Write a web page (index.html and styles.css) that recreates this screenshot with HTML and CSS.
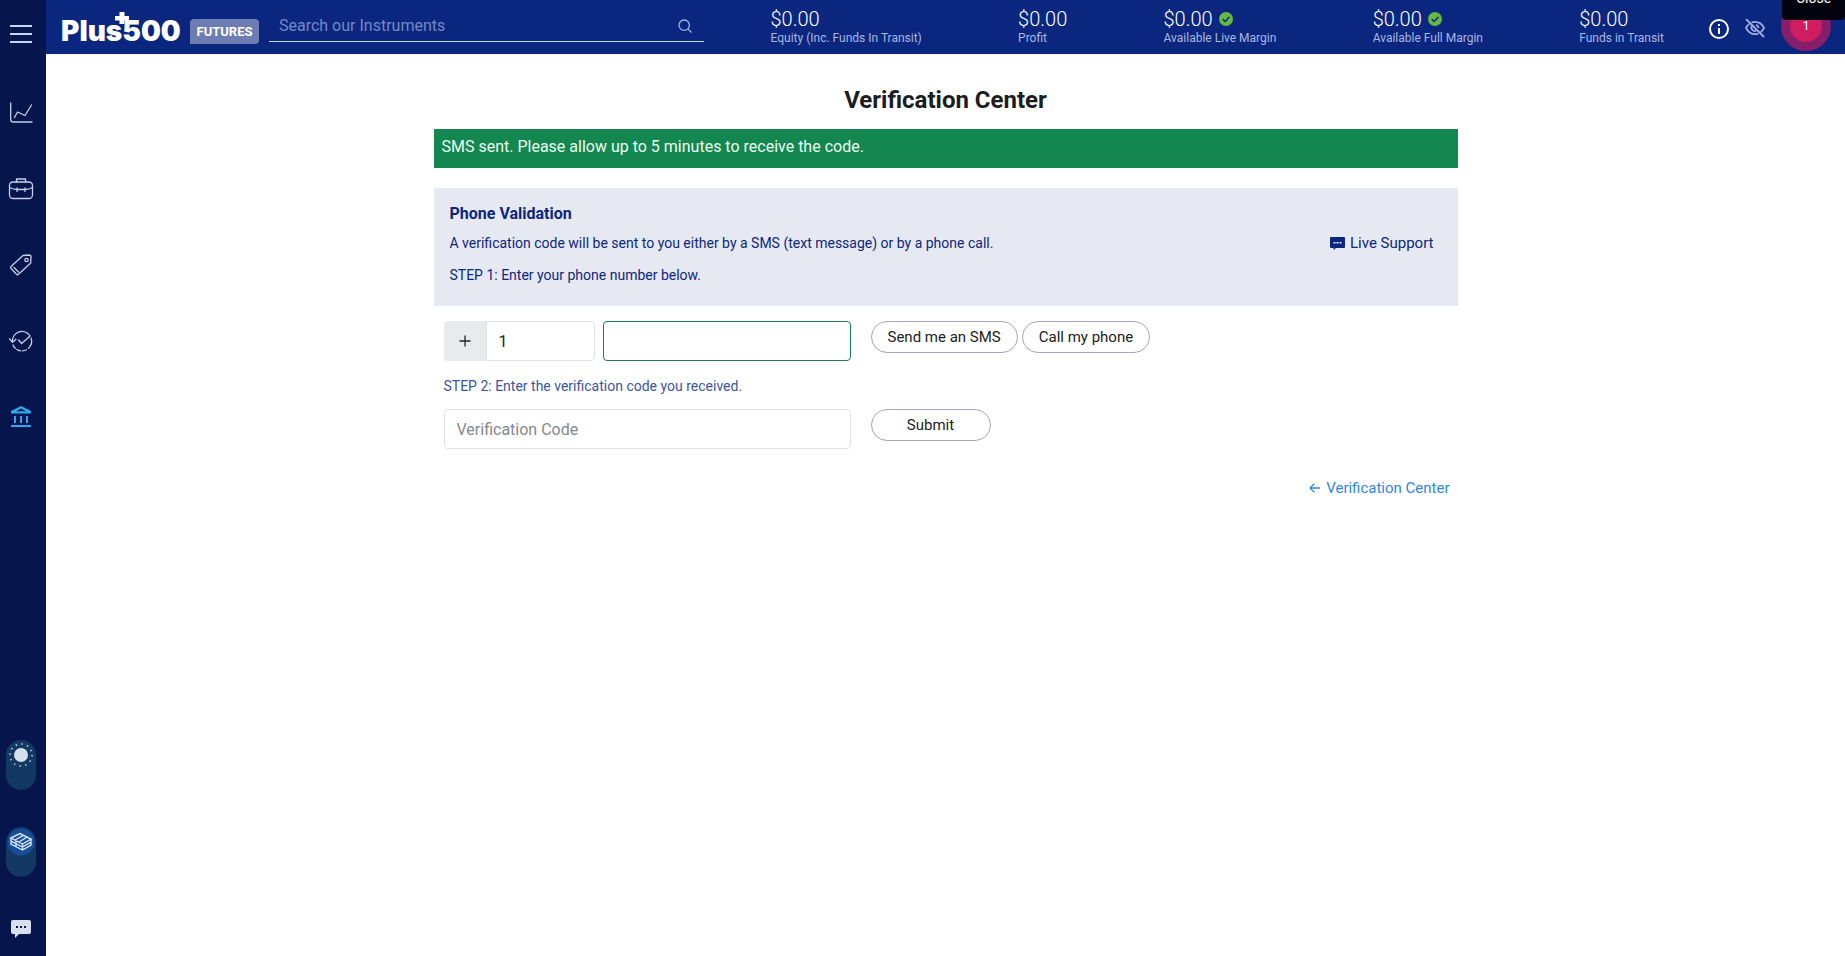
FILE: index.html
```html
<!DOCTYPE html>
<html lang="en">
<head>
<meta charset="utf-8">
<title>Verification Center</title>
<link rel="stylesheet" href="styles.css">
</head>
<body>
<div class="app">
  <nav class="sidebar" aria-label="Main">
    <button class="side-btn menu-btn" aria-label="Menu"><svg width="24" height="20" viewBox="0 0 24 20"><path d="M1 2h22M1 10h22M1 18h22" stroke="#c3d8fb" stroke-width="2"/></svg></button>
    <a class="side-btn" href="#" aria-label="Trade"><svg width="24" height="24" viewBox="0 0 24 24" class="line"><path d="M1.700 2v16.500q0 2.500 2.500 2.500H23M5.500 16.500l3-5.500 7.500 3.500L22.500 4"/></svg></a>
    <a class="side-btn" href="#" aria-label="Positions"><svg width="26" height="24" viewBox="0 0 26 24" class="line"><rect x="1.500" y="5" width="23" height="16.500" rx="3.500"/><path d="M8.500 5V2h9v3M1.500 10.500q4 2 7.500 2h8q4 0 7.500-2M9 11v3.500M17 11v3.500"/></svg></a>
    <a class="side-btn" href="#" aria-label="Orders"><svg width="24" height="24" viewBox="0 0 24 24" class="line"><path d="M14 2.500l6-.500q2 0 2 2l-.300 6L9.500 21.300q-1 .900-2 0L2 15.500q-.800-1 0-2zM5 14.500l4.500 4.500"/><circle cx="17.500" cy="7" r="1.700"/></svg></a>
    <a class="side-btn" href="#" aria-label="History"><svg width="26" height="24" viewBox="0 0 26 24" class="line"><path d="M4.500 13a9.500 9.500 0 0 1 17-6.800M23 9a9.500 9.500 0 0 1-2.500 10.200"/><path d="M18.500 20.700A9.500 9.500 0 0 1 4.900 15.500" stroke-dasharray="4 2"/><path d="M1.500 9.800l3 3.400 3.400-3M10.500 11l3.200 3.500L22 7" /></svg></a>
    <a class="side-btn" href="#" aria-label="Funds"><svg width="22" height="22" viewBox="0 0 22 22"><path fill="#2ba8f0" fill-rule="evenodd" d="M11 0l10 5v2.500H1V5zm0 2.500L6 5.300h10zM4 10h2v7H4zm6 0h2v7h-2zm6 0h2v7h-2zM1 19h20v2H1z"/></svg></a>
    <div class="side-foot">
      <button class="toggle" aria-label="Theme"><svg width="30" height="30" viewBox="0 0 30 30"><circle cx="15" cy="15" r="11" fill="none" stroke="#a9bdd4" stroke-width="2" stroke-dasharray="1.400 4.360"/><circle cx="15" cy="15" r="7" fill="#d6dfee"/></svg></button>
      <button class="toggle" aria-label="Account mode"><svg width="30" height="30" viewBox="0 0 30 30"><circle cx="15" cy="15" r="13.500" fill="#174c96"/><g fill="none" stroke="#d6e4f8" stroke-width="1.400"><path d="M5 11l9-4.500L25 12l-8.500 5zM9 13l8.500-4.700 3.500 1.700-8 5M5 11v3l11.500 6 8.500-5v-3M5 14v3l11.500 6 8.500-5v-3M16.500 17v6M10 14v5"/></g></svg></button>
      <button class="side-btn chat-btn" aria-label="Chat"><svg width="20" height="18" viewBox="0 0 20 18"><path fill="#d9dfee" d="M2 0h16q2 0 2 2v10q0 2-2 2H8l-4 4v-4H2q-2 0-2-2V2q0-2 2-2z"/><path fill="#06154c" d="M5 6h2v2H5zm4 0h2v2H9zm4 0h2v2h-2z"/></svg></button>
    </div>
  </nav>

  <div class="page">
    <header class="topbar">
      <a class="brand" href="#" aria-label="Plus500 Futures">
        <span class="wordmark">Plus500<svg class="cross" width="14" height="12" viewBox="0 0 14 12"><path fill="#fff" d="M4.500 0h5v4H14v4.500H9.500V12h-5V8.500H0V4h4.500z"/></svg></span>
        <span class="tag">FUTURES</span>
      </a>
      <label class="search">
        <input type="text" placeholder="Search our Instruments" aria-label="Search our Instruments">
        <svg width="14" height="14" viewBox="0 0 14 14" fill="none" stroke="#9fb4e4" stroke-width="1.300"><circle cx="6.200" cy="6.200" r="5.200"/><path d="M10 10l3.500 3.500"/></svg>
      </label>
      <div class="stats">
        <div class="stat"><div class="value">$0.00</div><div class="name">Equity (Inc. Funds In Transit)</div></div>
        <div class="stat"><div class="value">$0.00</div><div class="name">Profit</div></div>
        <div class="stat"><div class="value">$0.00<svg width="14" height="14" viewBox="0 0 14 14"><circle cx="7" cy="7" r="7" fill="#66b845"/><path d="M3.800 7.200l2.300 2.300 4.300-4.500" fill="none" stroke="#0b267f" stroke-width="1.500"/></svg></div><div class="name">Available Live Margin</div></div>
        <div class="stat"><div class="value">$0.00<svg width="14" height="14" viewBox="0 0 14 14"><circle cx="7" cy="7" r="7" fill="#66b845"/><path d="M3.800 7.200l2.300 2.300 4.300-4.500" fill="none" stroke="#0b267f" stroke-width="1.500"/></svg></div><div class="name">Available Full Margin</div></div>
        <div class="stat"><div class="value">$0.00</div><div class="name">Funds in Transit</div></div>
      </div>
      <div class="tools">
        <button class="tool" aria-label="Information"><svg width="20" height="20" viewBox="0 0 20 20"><circle cx="10" cy="10" r="9" fill="none" stroke="#fff" stroke-width="2"/><path fill="#fff" d="M9 5h2v2H9zm0 4h2v6H9z"/></svg></button>
        <button class="tool" aria-label="Hide balances"><svg width="20" height="20" viewBox="0 0 20 20" fill="none" stroke="#9fb0e0" stroke-width="1.800"><path d="M1 0l18 18M6.500 3.500Q8 2.900 10 2.900q6 0 9 6-1.200 2.600-3.300 4.200M4.200 5Q2 6.500 1 8.900q3 6.300 9 6.300 1.700 0 3.200-.600M11 6q2.500.700 2.500 3M6.700 7q-.900 2 .500 3.700t3.800 1.300"/></svg></button>
        <button class="alerts" aria-label="Notifications">1</button>
        <div class="tooltip" role="tooltip">Close</div>
      </div>
    </header>

    <main class="content">
      <h1>Verification Center</h1>
      <div class="notice" role="status">SMS sent. Please allow up to 5 minutes to receive the code.</div>
      <section class="panel">
        <div>
          <h2>Phone Validation</h2>
          <p>A verification code will be sent to you either by a SMS (text message) or by a phone call.</p>
          <p>STEP 1: Enter your phone number below.</p>
        </div>
        <a class="support" href="#"><svg width="15" height="13" viewBox="0 0 15 13"><path fill="#0b267f" d="M1 0h13q1 0 1 1v9q0 1-1 1H6l-2.500 2v-2H1q-1 0-1-1V1q0-1 1-1z"/><path fill="#e6e9f2" d="M3.500 5h2v1.500h-2zm3 0h2v1.500h-2zm3 0h2v1.500h-2z"/></svg>Live Support</a>
      </section>
      <form class="form">
        <div class="row">
          <div class="fields">
            <div class="country"><span class="plus"><svg width="12" height="12" viewBox="0 0 12 12"><path d="M6 .500v11M.500 6h11" stroke="#212529" stroke-width="1.300"/></svg></span><input type="text" value="1" aria-label="Country code"></div>
            <input class="phone" type="tel" aria-label="Phone number">
          </div>
          <div class="actions"><button type="button" class="pill">Send me an SMS</button><button type="button" class="pill">Call my phone</button></div>
        </div>
        <label class="step" for="code">STEP 2: Enter the verification code you received.</label>
        <div class="row">
          <div class="fields"><input class="code" id="code" type="text" placeholder="Verification Code"></div>
          <div class="actions"><button type="button" class="pill submit">Submit</button></div>
        </div>
      </form>
      <a class="back" href="#"><svg width="11" height="10" viewBox="0 0 11 10" fill="none" stroke="#2f86e6" stroke-width="1.300"><path d="M11 5H1M5.300 .700L1 5l4.300 4.300"/></svg>Verification Center</a>
    </main>
  </div>
</div>
</body>
</html>
```

FILE: styles.css
```css
* { box-sizing: border-box; }
body { margin: 0; font-family: Roboto, "Liberation Sans", sans-serif; font-size: 14px; color: #1b1d21; background: #fff; }
a { color: inherit; text-decoration: none; }
button { font-family: inherit; padding: 0; border: 0; background: none; color: inherit; cursor: pointer; }
input { font-family: inherit; font-size: 16px; min-width: 0; outline: 0; }
svg { display: block; flex: none; }
.app { display: flex; min-height: 100vh; }

.sidebar { flex: none; width: 46px; background: #06154c; display: flex; flex-direction: column; align-items: center; padding-right: 4px; }
.side-btn { display: flex; align-items: center; justify-content: center; width: 100%; height: 76px; }
.menu-btn { height: 68px; margin-bottom: 7px; }
.line { fill: none; stroke: #c5cfe8; stroke-width: 1.3; stroke-linecap: round; stroke-linejoin: round; }
.side-foot { margin-top: auto; display: flex; flex-direction: column; align-items: center; gap: 37px; padding-bottom: 18px; }
.toggle { width: 30px; height: 50px; border-radius: 15px; background: #123863; display: flex; align-items: flex-start; }
.chat-btn { height: 18px; margin-top: 6px; }

.page { flex: 1; min-width: 0; display: flex; flex-direction: column; }
.topbar { height: 54px; background: #0b267f; display: flex; align-items: flex-start; color: #fff; padding-left: 15px; }
.brand { display: flex; align-items: flex-start; gap: 8px; }
.wordmark { position: relative; width: 121px; padding-top: 15px; font-family: Inter, sans-serif; font-size: 28px; font-weight: 900; line-height: 32px; }
.cross { position: absolute; left: 54px; top: 12px; }
.tag { width: 69px; margin-top: 19px; height: 25px; border-radius: 4px; border-bottom-left-radius: 0; background: #6d7db2; font-size: 13px; font-weight: 700; line-height: 25px; text-align: center; }
.search { display: flex; align-items: center; flex: 1 1 434px; height: 42px; margin-left: 10px; padding: 10px 12px 0 10px; border-bottom: 1px solid #c3d8fb; }
.search input { flex: 1; border: 0; padding: 0; background: none; color: #fff; }
.search input::placeholder { color: #7389c6; opacity: 1; }
.stats { flex: 1 1 893px; display: flex; justify-content: space-between; margin-left: 67px; padding-top: 7px; }
.value { display: flex; align-items: center; gap: 6px; font-size: 20px; font-weight: 300; line-height: 24px; }
.name { color: #a9b8e2; font-size: 12px; line-height: 14px; white-space: nowrap; }
.tools { position: relative; display: flex; align-items: flex-start; gap: 16px; margin-left: 45px; padding-right: 14px; }
.tool { margin-top: 19px; }
.alerts { width: 50px; height: 50px; margin-top: 1px; border: 9px solid #861e6c; border-radius: 50%; background: #cf1d60; color: #fff; font-size: 12px; }
.tooltip { position: absolute; right: 0; top: -12px; width: 63px; height: 32px; border-radius: 4px; background: #03030f; font-size: 14px; line-height: 20px; text-align: center; }

.content { width: 1024px; max-width: 100%; margin: 0 auto; padding-top: 29px; display: flex; flex-direction: column; }
h1 { margin: 0; font-size: 24px; font-weight: 700; line-height: 34px; text-align: center; }
.notice { margin-top: 12px; padding: 6px 8px 9px; background: #14864f; color: #e9fff3; font-size: 16px; line-height: 24px; }
.panel { display: flex; justify-content: space-between; align-items: flex-start; margin-top: 20px; padding: 17px 24px 20px 16px; background: #e6e9f2; color: #0b267f; }
h2 { margin: 0 0 9px; font-size: 16px; font-weight: 700; line-height: 18px; }
.panel p { margin: 0 0 10px; font-size: 14px; line-height: 22px; }
.panel p:last-child { margin-bottom: 0; }
.support { display: flex; align-items: center; gap: 5px; margin-top: 27px; font-size: 15px; line-height: 22px; }
.form { padding: 15px 10px 0; }
.row { display: flex; align-items: flex-start; gap: 20px; }
.fields { display: flex; gap: 8px; width: 407px; }
.fields input { height: 40px; border: 1px solid #dfe2e6; border-radius: 4px; padding: 0 12px; color: #212529; }
.country { display: flex; flex: 0 1 151px; min-width: 0; }
.plus { display: flex; align-items: center; justify-content: center; width: 42px; background: #e8eaed; border-radius: 4px 0 0 4px; }
.country input { flex: 1; border-radius: 0 4px 4px 0; }
.fields .phone { flex: 1 1 248px; border-color: #14805a; }
.fields .code { flex: 1; }
.code::placeholder { color: #85888c; opacity: 1; }
.actions { display: flex; gap: 4px; }
.pill { height: 32px; padding: 0 16px; border: 1px solid #a6a5c6; border-radius: 16px; background: #fff; color: #1b1d21; font-size: 15px; }
.submit { width: 120px; }
.step { display: block; padding: 14px 0 12px; color: #3c55a2; font-size: 14px; line-height: 22px; }
.back { align-self: flex-end; display: flex; align-items: center; gap: 6px; margin: 28px 8px 0 0; color: #2f86e6; font-size: 15px; line-height: 22px; }
```
